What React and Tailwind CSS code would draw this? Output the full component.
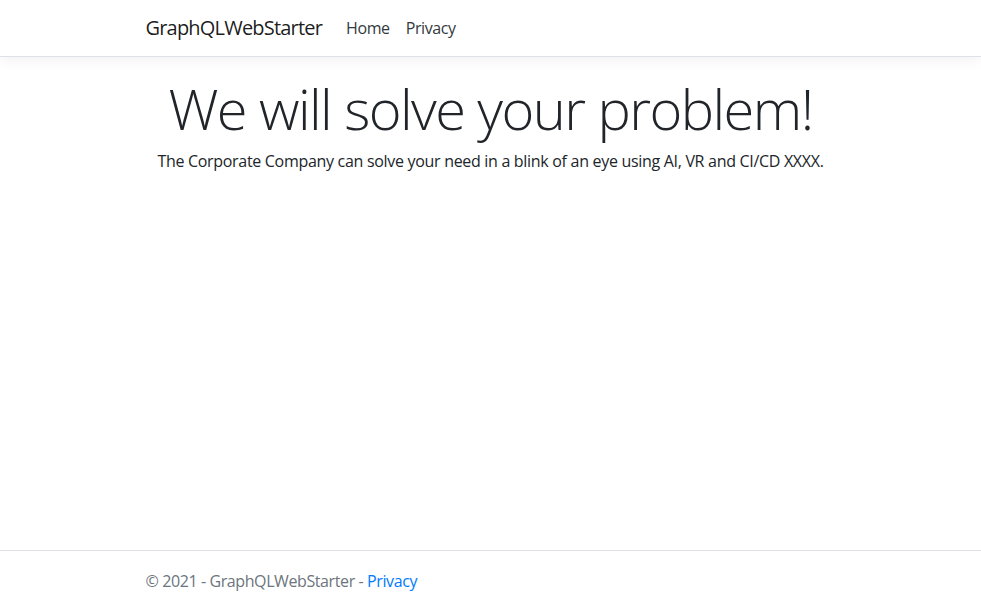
export default function App() {
  return (
    <div
      className="flex min-h-screen flex-col bg-white text-[#212529] tracking-[-0.025em]"
      style={{ fontFamily: '"Open Sans", "Noto Sans", sans-serif' }}
    >
      <header className="mb-4 border-b border-[#dee2e6] bg-white shadow-[0_4px_12px_rgba(0,0,0,0.05)]">
        <nav className="mx-auto flex h-14 w-[720px] items-center px-[15px]">
          <a href="#" className="mr-4 text-[20px] leading-[30px] tracking-[-0.04em] text-black/90">
            GraphQLWebStarter
          </a>
          <ul className="flex">
            <li>
              <a href="#" className="block px-2 text-base leading-6 text-[#343a40]">
                Home
              </a>
            </li>
            <li>
              <a href="#" className="block px-2 text-base leading-6 text-[#343a40]">
                Privacy
              </a>
            </li>
          </ul>
        </nav>
      </header>

      <main className="mx-auto w-[720px] flex-1 px-[15px] pb-4">
        <div className="text-center">
          <h1 className="mb-2 pt-[2px] text-[56px] font-light leading-[1.2] tracking-[-0.028em]">
            We will solve your problem!
          </h1>
          <p className="-mt-[1px] text-base leading-6 tracking-[-0.019em]">
            The Corporate Company can solve your need in a blink of an eye using AI, VR and CI/CD XXXX.
          </p>
        </div>
      </main>

      <footer className="border-t border-[#dee2e6] text-[#6c757d]">
        <div className="mx-auto w-[720px] px-[15px] text-base leading-[60px]">
          &copy; 2021 - GraphQLWebStarter -{" "}
          <a href="#" className="text-[#007bff]">
            Privacy
          </a>
        </div>
      </footer>
    </div>
  );
}
